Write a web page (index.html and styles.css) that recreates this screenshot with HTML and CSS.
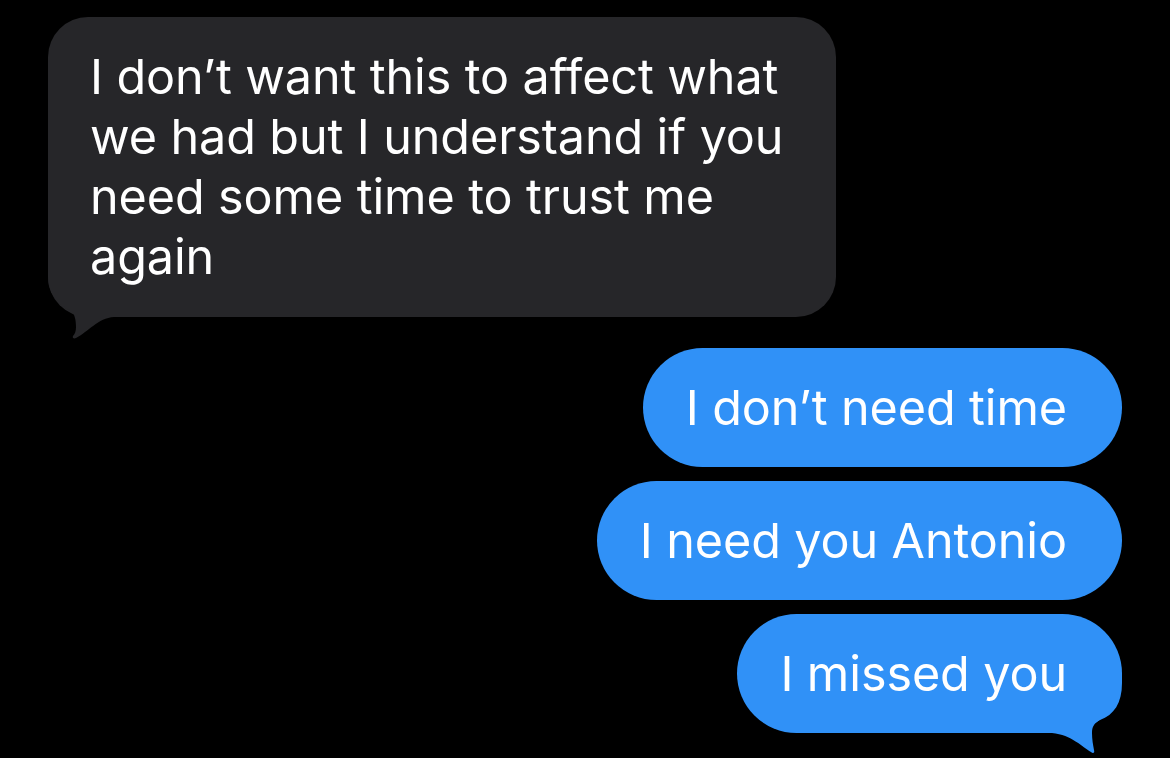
FILE: index.html
```html
<!DOCTYPE html>
<html>

<head>
	<title>Messages</title>
	<link rel="stylesheet" href="styles.css">
</head>

<body>
	<div class="thread">
		<div class="bubble in">
			I don’t want this to affect what<br>
			we had but I understand if you<br>
			need some time to trust me<br>
			again
			<svg class="tail tail-in" width="70" height="62" viewBox="0 0 70 62">
				<path d="M0,0 C0,14 8,27 23,34 C27,37 28,44 28,50 C28,54 27,57 25,59 C24,61 26,62 28,61 C40,55 50,41 66,40 H70 V0 Z" />
			</svg>
		</div>
		<div class="outgoing">
			<div class="bubble out">I don’t need time</div>
			<div class="bubble out">I need you Antonio</div>
			<div class="bubble out last">
				I missed you
				<svg class="tail tail-out" width="70" height="81" viewBox="0 0 70 81">
					<path d="M70,0 V10 C70,30 62,42 48,47 C42,50 40,54 40,60 C40,66 41,72 42,77 C43,80 41,81 39,79 C30,74 20,62 0,60 V0 Z" />
				</svg>
			</div>
		</div>
	</div>
</body>

</html>
```

FILE: styles.css
```css
html,
body {
	margin: 0;
	padding: 0;
	background: #000;
}

body {
	width: 1170px;
	height: 758px;
	overflow: hidden;
	font-family: Inter, "Noto Sans", sans-serif;
	font-size: 48.5px;
	letter-spacing: -0.1px;
	line-height: 60px;
	color: #fff;
}

.thread {
	display: flex;
	flex-direction: column;
	padding: 17px 48px 0 48px;
}

.bubble {
	position: relative;
	z-index: 0;
}

.in {
	align-self: flex-start;
	width: 746px;
	padding: 30px 0 30px 42px;
	background: #262629;
	border-radius: 40px;
	margin-bottom: 31px;
}

.outgoing {
	display: flex;
	flex-direction: column;
	align-items: flex-end;
	gap: 14px;
}

.out {
	padding: 29.5px 55px 29.5px 43px;
	background: #3091f7;
	border-radius: 60px;
	white-space: nowrap;
}

/* tails sit under the bubble text */
.tail {
	position: absolute;
	display: block;
	z-index: -1;
}

.tail-in {
	left: 0;
	top: 260px;
}

.tail-in path {
	fill: #262629;
}

.tail-out {
	right: 0;
	top: 59px;
}

.tail-out path {
	fill: #3091f7;
}
```
